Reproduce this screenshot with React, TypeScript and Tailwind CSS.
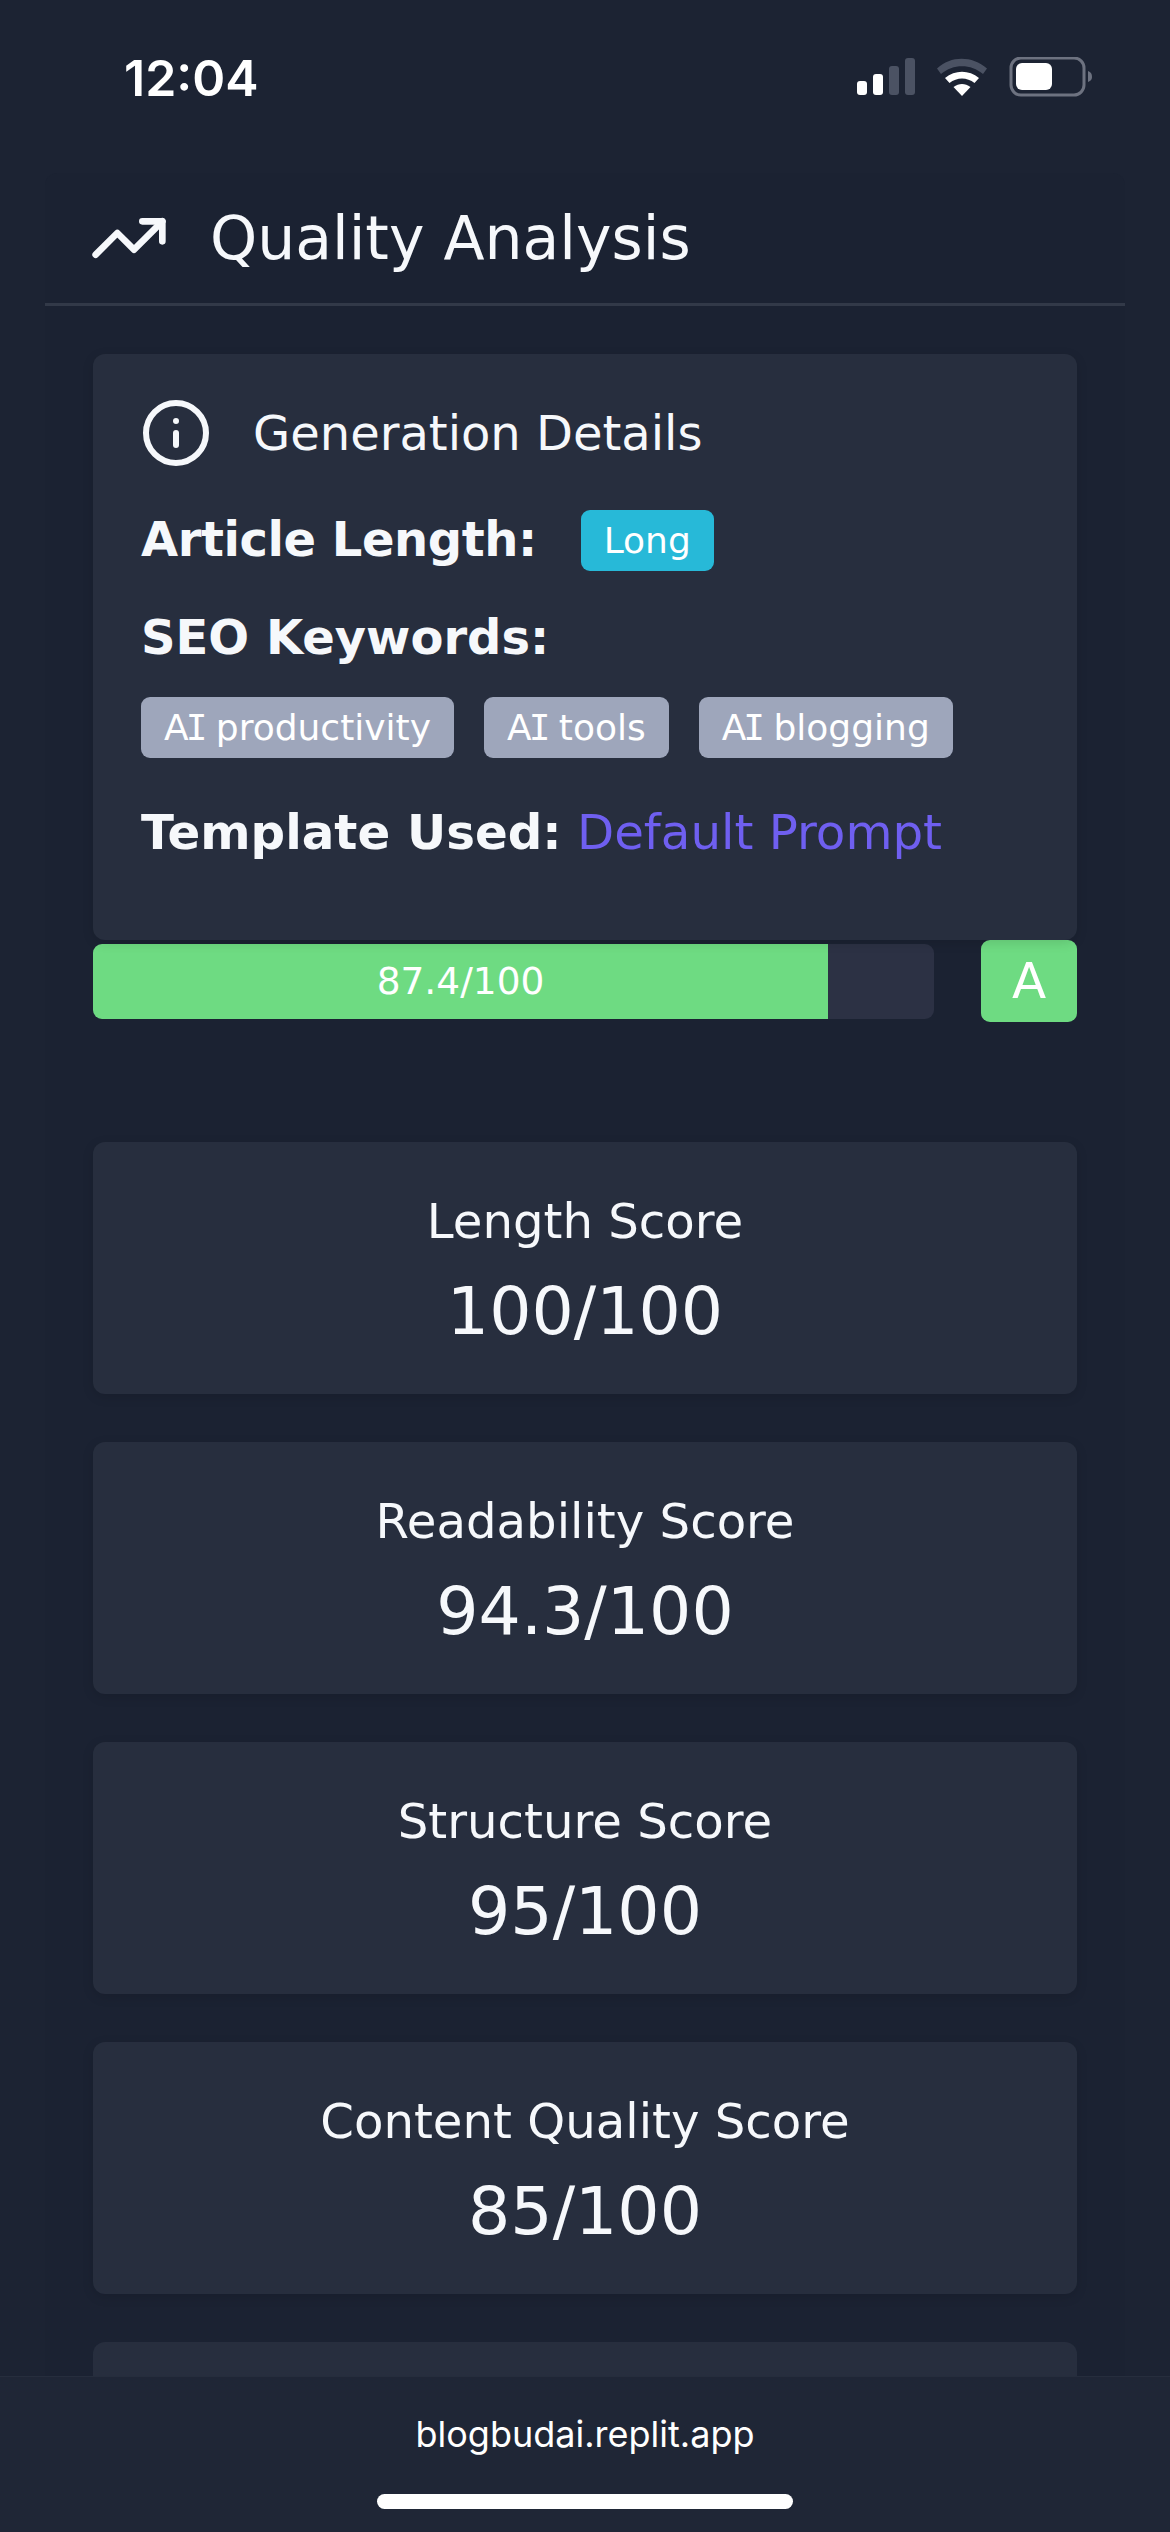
import { Info, TrendingUp } from "lucide-react";

const scores = [
  ["Length Score", "100/100"],
  ["Readability Score", "94.3/100"],
  ["Structure Score", "95/100"],
  ["Content Quality Score", "85/100"],
];

function StatusIcons() {
  return (
    <svg width="236" height="40" viewBox="0 0 236 40" className="block">
      <rect x="1" y="24" width="10" height="14" rx="3" fill="#fff" />
      <rect x="17" y="17" width="10" height="21" rx="3" fill="#fff" />
      <rect x="33" y="9" width="10" height="29" rx="3" fill="#4b5263" />
      <rect x="49" y="1" width="10" height="37" rx="3" fill="#4b5263" />
      <path d="M81 11.5 C95 -1.5 116 -1.5 131 11.5 L127 17 C115 6.5 97 6.5 85 17 Z" fill="#4b5263" />
      <path d="M89 21 C99 12.5 113 12.5 123 21 L118.5 26 C111 20 101 20 93.5 26 Z" fill="#fff" />
      <path d="M97.5 30 C103 26 109 26 114.5 30 L106 39 Z" fill="#fff" />
      <rect x="155" y="1" width="73" height="37" rx="10" fill="none" stroke="#6d7280" strokeWidth="3" />
      <rect x="160" y="6" width="36" height="27" rx="6" fill="#fff" />
      <path d="M232 14 C235 15 236 17 236 20 C236 22 235 24 232 25 Z" fill="#6d7280" />
    </svg>
  );
}

export default function App() {
  return (
    <div className="relative h-[2532px] w-[1170px] overflow-hidden bg-[#1c2333] font-['DejaVu_Sans',sans-serif] text-[#f6f8fb]">
      <div className="flex h-[173px] items-start justify-between pl-[124px] pr-[78px] pt-[50px]">
        <span className="font-['Inter',sans-serif] text-[50px] font-semibold leading-[56px] text-white">12:04</span>
        <div className="pt-[7px]">
          <StatusIcons />
        </div>
      </div>

      <div className="mx-[45px] rounded-t-[12px] bg-[#1b2232] px-[48px]">
        <div className="-mx-[48px] flex h-[133px] items-center border-b-[3px] border-[#323948] pl-[44px]">
          <TrendingUp size={80} strokeWidth={2} className="shrink-0" />
          <h1 className="ml-[41px] text-[60px] font-normal leading-[72px]">Quality Analysis</h1>
        </div>

        <section className="relative z-10 mt-[48px] h-[586px] rounded-[12px] bg-[#272e3e] pl-[48px] pr-[48px] pt-[43px] shadow-[0_3px_12px_rgba(0,0,0,0.12)]">
          <div className="flex h-[72px] items-center">
            <Info size={72} strokeWidth={2} className="-ml-[1px] shrink-0" />
            <h2 className="ml-[41px] text-[48px] font-normal leading-[58px]">Generation Details</h2>
          </div>
          <div className="mt-[41px] flex h-[61px] items-center">
            <span className="-mt-[4px] text-[48px] font-bold leading-[58px] tracking-[-0.45px]">Article Length:</span>
            <span className="ml-[44px] flex h-[61px] items-center rounded-[9px] bg-[#27b9d8] px-[23px] text-[36px] leading-[44px] text-white">Long</span>
          </div>
          <div className="mt-[37px] text-[48px] font-bold leading-[58px]">SEO Keywords:</div>
          <div className="mt-[31px] flex gap-[30px]">
            {["productivity", "tools", "blogging"].map((t) => (
              <span key={t} className="flex h-[61px] items-center rounded-[9px] bg-[#9ea6bb] px-[23px] text-[36px] leading-[44px] text-white">
                <span>
                  A<span className="ml-[-3px] mr-[-3px] font-['DejaVu_Sans_Mono',monospace]">I</span> {t}
                </span>
              </span>
            ))}
          </div>
          <div className="mt-[45px] text-[48.3px] leading-[58px]">
            <span className="font-bold">Template Used:</span> <span className="text-[#6f5ff0]">Default Prompt</span>
          </div>
        </section>

        <div className="flex h-[82px] items-center gap-[47px]">
          <div className="h-[75px] flex-1 overflow-hidden rounded-[9px] bg-[#2c3144]">
            <div className="flex h-full w-[735px] items-center justify-center bg-[#6edb82] text-[37.5px] text-white">87.4/100</div>
          </div>
          <div className="flex h-[82px] w-[96px] items-center justify-center rounded-[9px] bg-[#6edb82] text-[50px] text-white">A</div>
        </div>

        <div className="mt-[120px] flex flex-col gap-[48px]">
          {scores.map(([label, value]) => (
            <div key={label} className="flex h-[252px] flex-col items-center rounded-[12px] bg-[#272e3e] pt-[50px] shadow-[0_3px_12px_rgba(0,0,0,0.12)]">
              <div className="text-[48.2px] leading-[58px]">{label}</div>
              <div className="mt-[21px] text-[66.5px] leading-[80px]">{value}</div>
            </div>
          ))}
          <div className="h-[252px] rounded-[12px] bg-[#272e3e]" />
        </div>
      </div>

      <footer className="absolute inset-x-0 bottom-0 flex h-[156px] flex-col items-center border-t border-[#262d3d] bg-[#1f2636]">
        <div className="mt-[35px] font-['Inter',sans-serif] text-[36px] leading-[44px] text-white">blogbudai.replit.app</div>
        <div className="mt-[38px] h-[15px] w-[416px] rounded-full bg-white" />
      </footer>
    </div>
  );
}
